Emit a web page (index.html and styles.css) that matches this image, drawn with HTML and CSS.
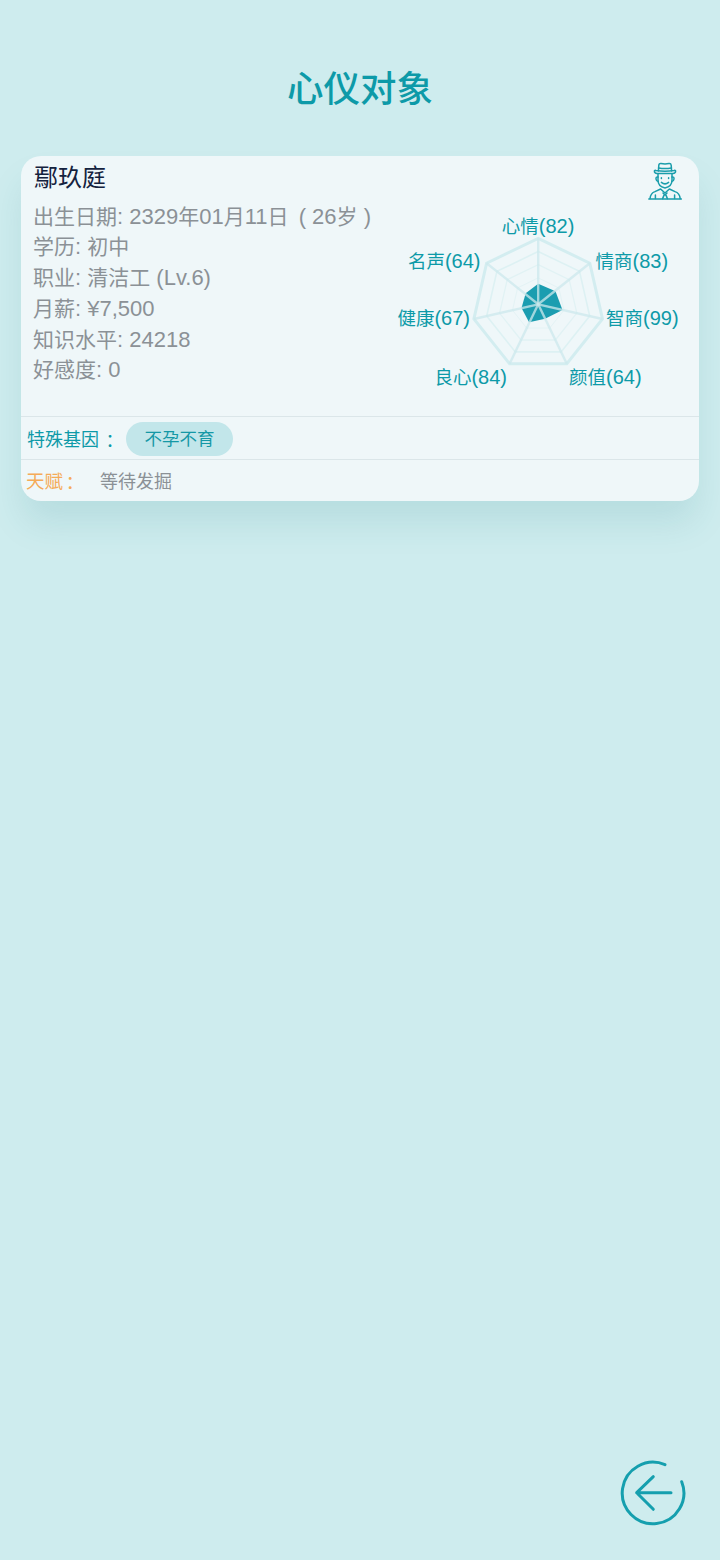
FILE: index.html
```html
<!DOCTYPE html>
<html lang="zh">
<head>
<meta charset="utf-8">
<title>心仪对象</title>
<link rel="stylesheet" href="styles.css">
</head>
<body>
<main class="page">
  <h1 class="title">心仪对象</h1>
  <section class="card">
    <div class="summary">
      <div class="info">
        <div class="name">鄢玖庭</div>
        <p class="line"><span class="hz">出生日期</span>: 2329<span class="hz">年</span>01<span class="hz">月</span>11<span class="hz">日</span> <span class="age">( 26<span class="hz">岁</span> )</span></p>
        <p class="line"><span class="hz">学历</span>: <span class="hz">初中</span></p>
        <p class="line"><span class="hz">职业</span>: <span class="hz">清洁工</span> (Lv.6)</p>
        <p class="line"><span class="hz">月薪</span>: ¥7,500</p>
        <p class="line"><span class="hz">知识水平</span>: 24218</p>
        <p class="line"><span class="hz">好感度</span>: 0</p>
      </div>
      <div class="side">
        <svg class="avatar" viewBox="0 0 36 40" width="36" height="40" fill="none" stroke="#1a9dab" stroke-width="1.5" stroke-linecap="round" stroke-linejoin="round">
          <path d="M10.4 9 L10.8 3.4 Q11 1.4 13 1.6 Q17 2.4 21 1.6 Q23 1.4 23.2 3.4 L23.6 9"/>
          <path d="M10.6 6 Q17 7.2 23.4 6"/>
          <path d="M6.4 9 Q6.4 11.4 9 11.4 L25 11.4 Q27.6 11.4 27.6 9 Q27.6 8 26 8.4 Q17 10 8 8.4 Q6.4 8 6.4 9Z"/>
          <path d="M10 12 V18 Q10 24.6 17 26 Q24 24.6 24 18 V12"/>
          <path d="M10 15 Q7.8 14.6 8 17 Q8.2 19.2 10.2 19.4 M24 15 Q26.2 14.6 26 17 Q25.8 19.2 23.8 19.4"/>
          <path d="M13.4 20.4 Q17 23.4 20.6 20.4"/>
          <path d="M13.4 15.8 V16.4 M20.6 15.8 V16.4"/>
          <path d="M0.8 37 H33.4"/>
          <path d="M2 36.6 Q2.6 31 7 29.6 L12.6 27 L17 31 L21.4 27 L27 29.6 Q31.6 31 32.2 36.6"/>
          <path d="M15 31 L17 33 L19 31 M15.8 33.6 L14.6 36.6 M18.2 33.6 L19.4 36.6 M7.4 33 V36.6 M26.6 33 V36.6"/>
        </svg>
        <svg class="radar" viewBox="0 0 300 190" width="300" height="190" role="img" aria-label="属性雷达图">
          <g class="web">
            <polygon class="ring ring-5" points="139.2,15.3 190.8,40.2 203.5,96 167.8,140.8 110.6,140.8 74.9,96 87.6,40.2"/>
            <polygon class="ring ring-4" points="139.2,28.5 180.5,48.4 190.7,93 162.1,128.9 116.3,128.9 87.7,93 97.9,48.4"/>
            <polygon class="ring ring-3" points="139.2,41.7 170.2,56.6 177.8,90.1 156.4,117 122,117 100.6,90.1 108.2,56.6"/>
            <polygon class="ring ring-2" points="139.2,54.9 159.8,64.9 164.9,87.2 150.7,105.1 127.7,105.1 113.5,87.2 118.6,64.9"/>
            <polygon class="ring ring-1" points="139.2,68.1 149.5,73.1 152.1,84.2 144.9,93.2 133.5,93.2 126.3,84.2 128.9,73.1"/>
          </g>
          <polygon class="data" points="139.2,60.8 156.5,68.3 163.5,87 146.1,95.7 130.1,99.2 122.5,85 126.7,70.3"/>
          <g class="spokes">
            <line x1="139.2" y1="81.3" x2="139.2" y2="15.3"/>
            <line x1="139.2" y1="81.3" x2="190.8" y2="40.2"/>
            <line x1="139.2" y1="81.3" x2="203.5" y2="96"/>
            <line x1="139.2" y1="81.3" x2="167.8" y2="140.8"/>
            <line x1="139.2" y1="81.3" x2="110.6" y2="140.8"/>
            <line x1="139.2" y1="81.3" x2="74.9" y2="96"/>
            <line x1="139.2" y1="81.3" x2="87.6" y2="40.2"/>
          </g>
          <g class="labels">
            <text x="139" y="9.5" text-anchor="middle">心情<tspan class="num">(82)</tspan></text>
            <text x="196.5" y="44.5">情商<tspan class="num">(83)</tspan></text>
            <text x="207" y="101.5">智商<tspan class="num">(99)</tspan></text>
            <text x="170" y="160.5">颜值<tspan class="num">(64)</tspan></text>
            <text x="108" y="160.5" text-anchor="end">良心<tspan class="num">(84)</tspan></text>
            <text x="71" y="101.5" text-anchor="end">健康<tspan class="num">(67)</tspan></text>
            <text x="81.5" y="44.5" text-anchor="end">名声<tspan class="num">(64)</tspan></text>
          </g>
        </svg>
      </div>
    </div>
    <div class="row gene-row">
      <span class="gene-label">特殊基因<span class="colon gene-colon" lang="zh-Hant">：</span></span>
      <span class="tag">不孕不育</span>
    </div>
    <div class="row talent-row">
      <span class="talent-label">天赋<span class="colon talent-colon" lang="zh-Hant">：</span></span>
      <span class="talent-value">等待发掘</span>
    </div>
  </section>
  <button class="back" type="button" aria-label="返回">
    <svg viewBox="0 0 72 72" width="72" height="72" fill="none" stroke="#159fae" stroke-width="3" stroke-linecap="round" stroke-linejoin="round">
      <path d="M48 7.6 A30.8 30.8 0 1 0 64.7 24.7"/>
      <path d="M54 35.7 H19.7 M36.3 19.7 L19.7 35.7 L36.3 52.3"/>
    </svg>
  </button>
</main>
</body>
</html>
```
FILE: styles.css
```css
* { box-sizing: border-box; }
html, body { margin: 0; padding: 0; }
body {
  background: #ceecee;
  font-family: "Liberation Sans", "Noto Sans CJK SC", sans-serif;
}
.page {
  height: 1560px;
  overflow: hidden;
  padding: 0 21px 0 21px;
  display: flex;
  flex-direction: column;
}
.title {
  margin: 66px 0 0;
  height: 90px;
  text-align: center;
  color: #0d9aa8;
  font-size: 36.5px;
  line-height: 48px;
  font-weight: 500;
}
.card {
  width: 678px;
  height: 345px;
  flex: none;
  background: #eff7f9;
  border-radius: 20px;
  box-shadow: 0 24px 34px -2px rgba(30, 120, 130, 0.13);
  display: flex;
  flex-direction: column;
}
.summary {
  height: 260px;
  display: flex;
  justify-content: space-between;
}
.info { padding: 6px 0 0 12px; }
.name {
  height: 39.5px;
  color: #14223e;
  font-size: 24px;
  line-height: 32px;
  padding-left: 1px;
}
.line {
  margin: 0;
  color: #8b9196;
  font-size: 22px;
  line-height: 30.8px;
  white-space: nowrap;
}
.hz { font-size: 21px; }
.age { margin-left: 4px; }
.side {
  width: 300px;
  display: flex;
  flex-direction: column;
  align-items: flex-end;
}
.avatar { margin: 6px 15px 0 0; flex: none; }
.radar { margin: 21px 0 0 0; flex: none; overflow: visible; }
.ring { fill: none; stroke: #d3edf0; }
.ring-5 { stroke-width: 3; }
.ring-4 { stroke-width: 1.6; stroke: #ddf1f3; }
.ring-3 { stroke-width: 1.3; stroke: #e1f2f4; }
.ring-2 { stroke-width: 1; stroke: #e4f3f5; }
.ring-1 { stroke-width: 1; stroke: #e7f4f6; }
.data { fill: #1b9db0; }
.spokes line { stroke: #cde9ed; stroke-width: 2.4; opacity: 0.75; }
.labels text {
  fill: #0d9aa8;
  font-size: 18.5px;
}
.labels .num { font-size: 20px; }
.row {
  display: flex;
  align-items: center;
  border-top: 1px solid #dbe6e9;
}
.gene-row { height: 43px; padding: 0 0 0 6px; }
.talent-row { height: 42px; padding: 0 0 1px 5px; }
.gene-label {
  width: 99px;
  color: #0d9aa8;
  font-size: 18px;
  white-space: nowrap;
}
.colon {
  font-family: "Noto Sans CJK TC", sans-serif;
  line-height: 0;
  vertical-align: -2px;
}
.gene-colon { margin-left: 2px; }
.talent-colon { margin-left: -2px; }
.tag {
  width: 107px;
  height: 34px;
  margin-top: 2px;
  border-radius: 17px;
  background: #c2e6ea;
  color: #1598a6;
  font-size: 17.5px;
  line-height: 34px;
  text-align: center;
}
.talent-label {
  width: 74px;
  color: #f5ab58;
  font-size: 18.5px;
}
.talent-value {
  color: #8b9196;
  font-size: 18px;
}
.back {
  margin: auto 10px 31px auto;
  padding: 0;
  border: 0;
  background: none;
  width: 72px;
  height: 72px;
  flex: none;
  display: block;
}
```
